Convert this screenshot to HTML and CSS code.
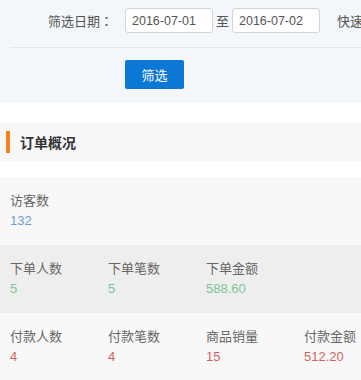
FILE: index.html
```html
<!DOCTYPE html>
<html>
<head>
    <meta charset="utf-8">
    <title>订单概况</title>
    <link rel="stylesheet" href="styles.css">
</head>
<body>
<div class="filter">
    <div class="filter-row">
        <span class="filter-label">筛选日期<span class="colon">：</span></span>
        <input class="date" type="text" value="2016-07-01">
        <span class="sep">至</span>
        <input class="date" type="text" value="2016-07-02">
        <span class="quick">快速选择：</span>
    </div>
    <div class="filter-actions">
        <button class="btn" type="button">筛选</button>
    </div>
</div>

<div class="section-title"><span class="bar"></span>订单概况</div>

<div class="stats">
    <div class="stats-row">
        <div class="cell"><div class="name">访客数</div><div class="num blue">132</div></div>
    </div>
    <div class="stats-row dark">
        <div class="cell"><div class="name">下单人数</div><div class="num green">5</div></div>
        <div class="cell"><div class="name">下单笔数</div><div class="num green">5</div></div>
        <div class="cell"><div class="name">下单金额</div><div class="num green">588.60</div></div>
    </div>
    <div class="stats-row">
        <div class="cell"><div class="name">付款人数</div><div class="num red">4</div></div>
        <div class="cell"><div class="name">付款笔数</div><div class="num red">4</div></div>
        <div class="cell"><div class="name">商品销量</div><div class="num red">15</div></div>
        <div class="cell"><div class="name">付款金额</div><div class="num red">512.20</div></div>
    </div>
</div>
</body>
</html>
```

FILE: styles.css
```css
html, body
{
    margin:0;
    padding:0;
    background:#fff;
    overflow:hidden;
}

body
{
    font-family:"Liberation Sans", "Noto Sans CJK SC", sans-serif;
    font-size:13px;
    color:#666;
}

.filter
{
    background:#f3f6fa;
    padding-top:8px;
}

.filter-row
{
    display:flex;
    align-items:center;
    white-space:nowrap;
    overflow:hidden;
    margin-left:10px;
    padding-bottom:14px;
    border-bottom:1px solid #e3e7ec;
}

.filter-label
{
    width:103px;
    flex:none;
    text-align:right;
    color:#555;
    margin-right:12px;
}

.colon
{
    font-family:"Noto Sans CJK TC", sans-serif;
}

.date
{
    box-sizing:border-box;
    flex:none;
    width:88px;
    height:25px;
    padding:0 6px;
    border:1px solid #d4d4d4;
    border-radius:3px;
    background:#fff;
    font-family:inherit;
    font-size:12.5px;
    color:#555;
    outline:none;
}

.sep
{
    flex:none;
    width:19px;
    text-align:center;
    color:#555;
}

.quick
{
    flex:none;
    margin-left:17px;
    color:#555;
}

.filter-actions
{
    padding:12px 0 14px 125px;
}

.btn
{
    display:block;
    width:59px;
    height:29px;
    border:0;
    border-radius:2px;
    background:#0b78d5;
    color:#fff;
    font-family:inherit;
    font-size:13px;
    padding:0;
}

.section-title
{
    display:flex;
    align-items:center;
    margin-top:19px;
    height:39px;
    background:#f7f7f7;
    font-size:14px;
    font-weight:bold;
    color:#333;
}

.bar
{
    width:4px;
    height:22px;
    margin:0 10px 0 6px;
    background:#f5811f;
}

.stats
{
    margin-top:16px;
}

.stats-row
{
    display:grid;
    grid-template-columns:repeat(4, 98px);
    padding:14px 0 14px 10px;
    background:#f8f8f8;
    line-height:20px;
}

.stats-row.dark
{
    background:#eeeeee;
}

.name
{
    color:#666;
}

.num
{
    font-size:13px;
}

.blue  { color:#6d9ed3; }
.green { color:#7cc397; }
.red   { color:#db5f5f; }
```
